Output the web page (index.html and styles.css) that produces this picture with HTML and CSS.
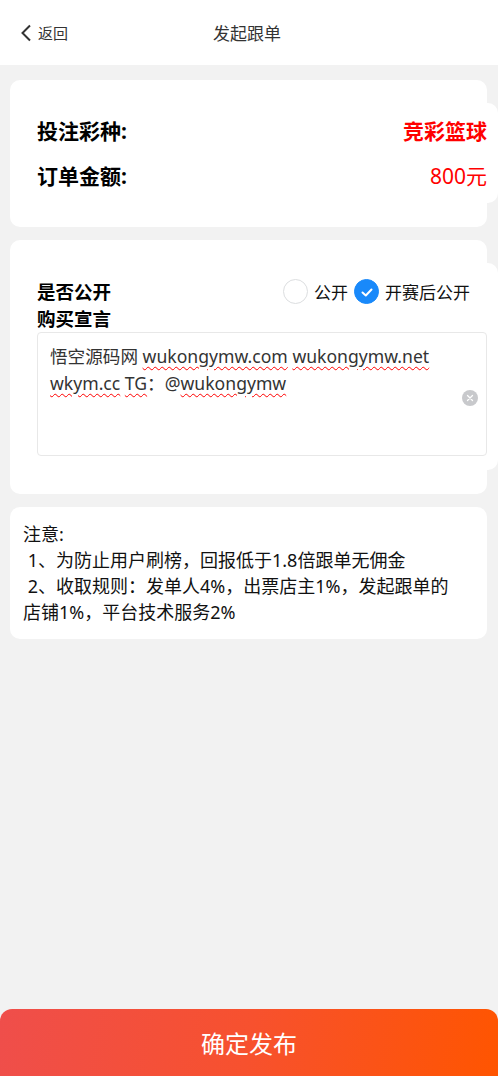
FILE: index.html
```html
<!DOCTYPE html>
<html lang="zh-CN">
<head>
  <meta charset="utf-8" />
  <meta name="viewport" content="width=device-width, initial-scale=1" />
  <title>发起跟单</title>
  <link rel="stylesheet" href="styles.css">
</head>
<body>
  <header class="nav">
    <a class="back" href="#">
      <svg class="back-icon" viewBox="0 0 12 18" width="12" height="18"><path d="M10 1.5 L2.5 9 L10 16.5" fill="none" stroke="#333" stroke-width="2"/></svg>
      <span>返回</span>
    </a>
    <div class="nav-title">发起跟单</div>
  </header>

  <main class="page">
    <section class="card">
      <div class="inner info">
        <div class="row">
          <span class="label">投注彩种:</span>
          <span class="value strong">竞彩篮球</span>
        </div>
        <div class="row">
          <span class="label">订单金额:</span>
          <span class="value">800元</span>
        </div>
      </div>
    </section>

    <section class="card">
      <div class="inner publish">
        <div class="row-open">
          <span class="label">是否公开</span>
          <div class="radios">
            <span class="radio"><i class="dot"></i>公开</span>
            <span class="radio checked">
              <i class="dot"><svg viewBox="0 0 24 24" width="24" height="24"><path d="M7.5 12.5 L10.8 15.5 L16.5 9.5" fill="none" stroke="#fff" stroke-width="2" stroke-linecap="round" stroke-linejoin="round"/></svg></i>开赛后公开
            </span>
          </div>
        </div>
        <div class="label">购买宣言</div>
        <div class="field">
          <div class="field-text">悟空源码网 <span class="sp">wukongymw.com</span> <span class="sp">wukongymw.net</span> <span class="sp">wkym.cc</span> <span class="sp">TG</span>：@<span class="sp">wukongymw</span></div>
          <span class="clear"><svg viewBox="0 0 16 16" width="16" height="16"><circle cx="8" cy="8" r="8" fill="#c8c9cc"/><path d="M5.5 5.5 L10.5 10.5 M10.5 5.5 L5.5 10.5" stroke="#fff" stroke-width="1.3" stroke-linecap="round"/></svg></span>
        </div>
      </div>
    </section>

    <section class="card notice">
      <p>注意:</p>
      <p>&nbsp;1、为防止用户刷榜，回报低于1.8倍跟单无佣金</p>
      <p>&nbsp;2、收取规则：发单人4%，出票店主1%，发起跟单的店铺1%，平台技术服务2%</p>
    </section>
  </main>

  <button class="submit">确定发布</button>
</body>
</html>
```

FILE: styles.css
```css
* { box-sizing: border-box; }

body{
  margin:0;
  background:#f2f2f2;
  font-family: "Noto Sans", "Noto Sans CJK SC", sans-serif;
  color:#000;
}

.nav{
  position:relative;
  height:65px;
  background:#fff;
  display:flex; align-items:center; justify-content:center;
}
.back{
  position:absolute; left:20px; top:24px;
  display:flex; align-items:center; gap:6px;
  color:#333; text-decoration:none; font-size:15px; line-height:18px;
}
.back-icon{ display:block; }
.nav-title{ font-size:17px; color:#333; margin-left:-4px; }

.page{
  display:flex; flex-direction:column; gap:13px;
  padding:15px 11px 120px 10px;
}

.card{
  background:#fff;
  border-radius:10px;
  padding:23px 0 24px;
}
.inner{
  background:#fff;
  border-radius:10px;
  margin:0 -11px 0 17px;
  padding:5px 11px 5px 10px;
}

.label{ font-size:19px; font-weight:700; line-height:27px; }

.info .row{
  display:flex; justify-content:space-between; align-items:center;
  height:45px;
}
.info .label, .info .value{ font-size:21px; line-height:28px; }
.info .value{ color:#f00; }
.info .value.strong{ font-weight:700; }

.publish{ padding:14px 11px 14px 10px; }
.row-open{ display:flex; justify-content:space-between; align-items:center; height:28px; }
.row-open .label{ font-size:18.5px; }
.publish > .label{ font-size:18.5px; }
.radios{ display:flex; align-items:center; gap:6px; margin-right:17px; }
.radio{ display:flex; align-items:center; gap:6px; font-size:17px; color:#111; }
.dot{
  width:25px; height:25px; border-radius:50%;
  border:1px solid #dcdee0; background:#fff;
  display:grid; place-items:center;
}
.dot svg{ display:block; }
.radio.checked .dot{ background:#1989fa; border-color:#1989fa; }

.field{
  position:relative;
  height:124px;
  border:1px solid #e8e8e8;
  border-radius:4px;
  padding:10px 12px;
}
.field-text{ font-size:17.6px; line-height:27px; color:#333; padding-right:10px; }
.sp{ text-decoration: underline wavy #f00; text-decoration-thickness:1px; text-underline-offset:3px; }
.clear{ position:absolute; right:8px; top:57px; }
.clear svg{ display:block; }

.notice{ padding:14px 24px 14px 13px; }
.notice p{ margin:0; font-size:18px; line-height:26px; color:#111; }

.submit{
  position:fixed; left:0; right:0; bottom:0;
  height:67px; width:100%;
  border:0; border-radius:12px 12px 0 0;
  background:linear-gradient(100deg, #ef4e4b 0%, #f7512e 50%, #ff5500 100%);
  color:#fff; font-size:24px;
  font-family: "Noto Sans", "Noto Sans CJK SC", sans-serif;
  padding-bottom:2px;
}
```
